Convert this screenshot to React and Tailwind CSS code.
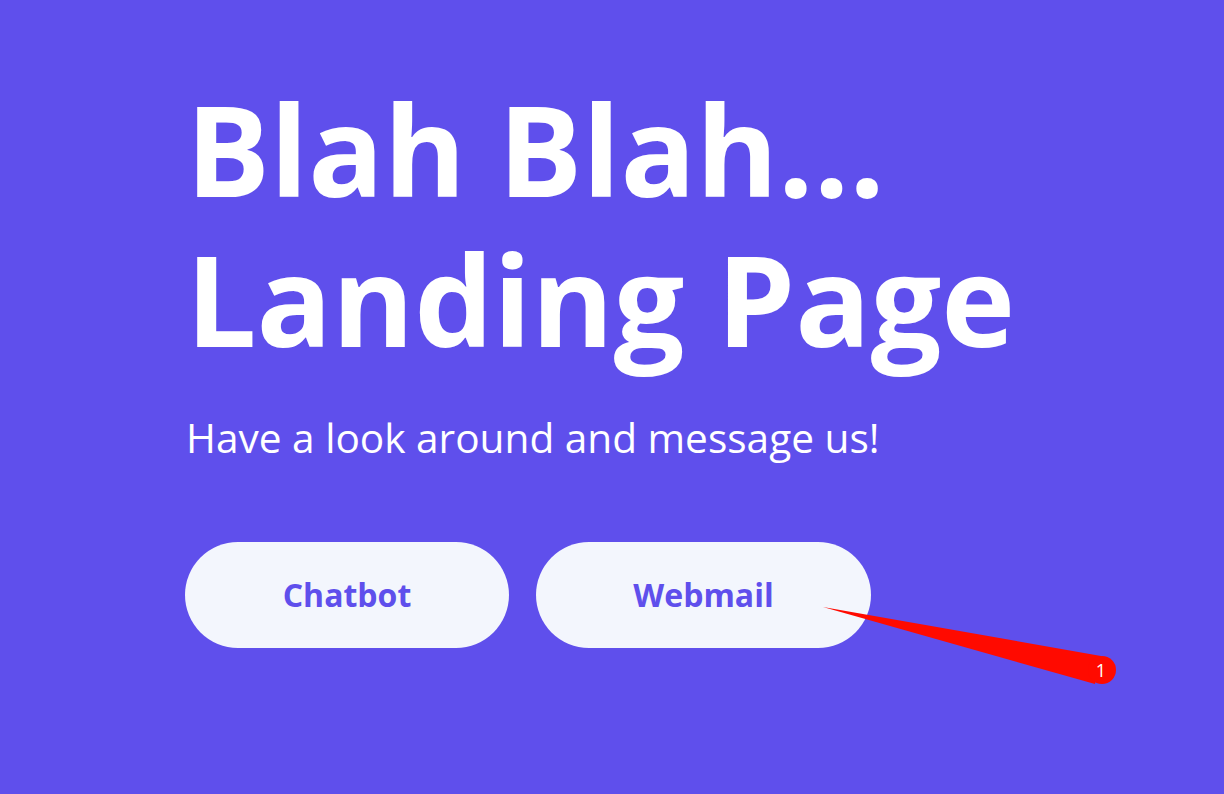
export default function App() {
	return (
		<div className="relative min-h-[794px] w-full overflow-hidden bg-[#5f4fec] font-['Open_Sans',sans-serif]">
			<div className="px-[186px] pt-[74px]">
				<h1 className="text-[125px] font-bold leading-[150px] text-white">
					Blah Blah...
					<br />
					Landing Page
				</h1>
				<p className="mt-[34px] text-[40.6px] leading-[60px] text-white">
					Have a look around and message us!
				</p>
				<div className="-ml-px mt-[74px] flex gap-[27px]">
					<button className="h-[106px] w-[324px] rounded-full bg-[#f3f6fd] text-[32px] font-bold text-[#5f4fec]">
						Chatbot
					</button>
					<button className="h-[106px] w-[335px] rounded-full bg-[#f3f6fd] text-[32px] font-bold text-[#5f4fec]">
						Webmail
					</button>
				</div>
			</div>

			{/* annotation marker */}
			<svg className="pointer-events-none absolute left-0 top-0" width="1224" height="794">
				<polygon points="823,607 1101,656 1095,684" fill="#ff0a00" />
				<circle cx="1102" cy="670" r="14" fill="#ff0a00" />
				<text x="1101" y="677" textAnchor="middle" fontSize="18" fill="white" fontFamily="Open Sans, sans-serif">
					1
				</text>
			</svg>
		</div>
	);
}
